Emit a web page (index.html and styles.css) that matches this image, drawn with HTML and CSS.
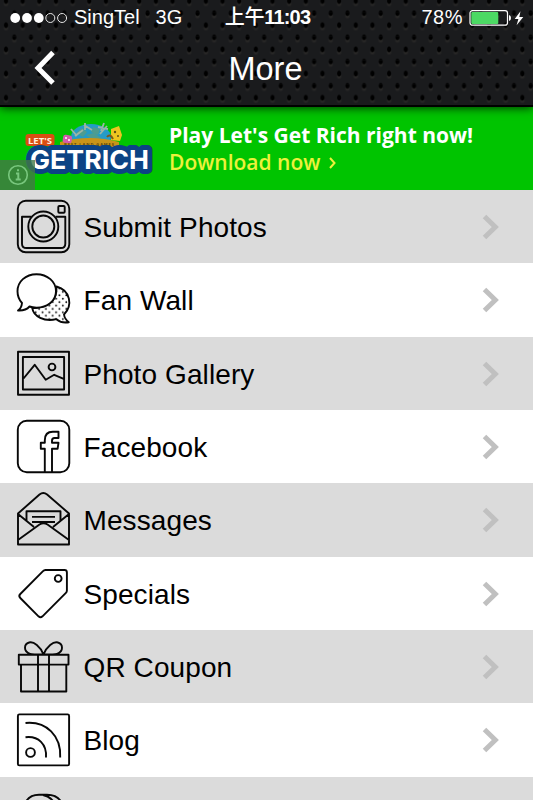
FILE: index.html
```
<!DOCTYPE html>
<html lang="en">
<head>
<meta charset="utf-8">
<title>More</title>
<link rel="stylesheet" href="styles.css">
</head>
<body>
<header class="header">
  <div class="status">
    <div class="status-left">
      <svg class="signal" width="58" height="12" viewBox="0 0 58 12"><g fill="#fff"><circle cx="5.2" cy="6" r="4.9"/><circle cx="17" cy="6" r="4.9"/><circle cx="28.8" cy="6" r="4.9"/></g><g fill="none" stroke="#e8e8e8"><circle cx="40.3" cy="6" r="4.5"/><circle cx="52.1" cy="6" r="4.5"/></g></svg>
      <span class="carrier">SingTel</span><span class="network">3G</span>
    </div>
    <div class="clock">上午<b>11:03</b></div>
    <div class="status-right">
      <span class="percent">78%</span>
      <svg width="56" height="18" viewBox="0 0 56 18"><rect x="1" y="1.6" width="37.5" height="14.6" rx="2.5" fill="none" stroke="#fff" stroke-width="1.2"/><rect x="2.3" y="2.9" width="27" height="12" rx="1" fill="#4cd964"/><path d="M40 6q2 .3 2 3t-2 3z" fill="#fff"/><path d="M51.5 2.2L45.7 10h3.7l-1.8 6.2L54.3 8h-4z" fill="#fff"/></svg>
    </div>
  </div>
  <div class="nav">
    <svg class="back" width="24" height="36" viewBox="0 0 24 36"><path d="M21 2.500L6 18l15 15" fill="none" stroke="#fff" stroke-width="5"/></svg>
    <h1 class="title">More</h1>
  </div>
</header>
<section class="banner">
  <svg class="logo" width="162" height="83" viewBox="0 0 162 83">
    <ellipse cx="91" cy="30" rx="20" ry="13" fill="#259bc6"/>
    <path d="M76 26l6-5 5 4-4 5zM93 20l7 2-2 6-7-3zM86 28l8-2 7 5-7 3z" fill="#4d9c91"/>
    <path d="M71 22l6 7M75 29l8-6M84 18l8 5M104 16l-3 8M107 19l-7 8M85 16v7M98 20l10 2" stroke="#9db5a5" stroke-width="1.800"/>
    <path d="M60 35q30-8 59 0v9H60z" fill="#c99418"/>
    <rect x="63" y="28" width="9" height="8" rx="2.500" fill="#d45bac" transform="rotate(8 67 31)"/><circle cx="66" cy="31" r="1" fill="#fff"/><circle cx="69" cy="33" r="1" fill="#fff"/>
    <path d="M111 22l8-3 3 9-2 6-9-1z" fill="#edc520"/><circle cx="115" cy="25" r="1.200" fill="#5c5015"/><circle cx="118" cy="29" r="1" fill="#5c5015"/><path d="M107 30q3-4 6 2" fill="none" stroke="#7a5b1b" stroke-width="2"/>
    <text x="64" y="38.500" class="ribbon" textLength="50">BEST LAND GAMES</text>
    <rect x="25.500" y="27" width="29" height="12" rx="3" fill="#da4d12"/>
    <text x="28" y="36.500" class="lets" textLength="24" lengthAdjust="spacingAndGlyphs">LET'S</text>
    <text x="30" y="62" class="rich" textLength="119" lengthAdjust="spacingAndGlyphs">GETRICH</text>
  </svg>
  <div class="ad">
    <div class="ad-title">Play Let's Get Rich right now!</div>
    <div class="ad-link">Download now <svg width="9" height="12" viewBox="0 0 9 12"><path d="M2 1l4.5 5L2 11" fill="none" stroke="#edf13c" stroke-width="2"/></svg></div>
  </div>
  <div class="info"><svg width="22" height="22" viewBox="0 0 22 22" fill="none" stroke="#79c77e"><circle cx="11" cy="11" r="9.3" stroke-width="1.6"/><path d="M9 9.5h2.3V15M8.7 15.5h5M11 5.3v2" stroke-width="2"/></svg></div>
</section>
<main class="list">
  <div class="row"><svg class="icon" viewBox="16 0 56 73"><rect x="17.8" y="10.8" width="51.5" height="51.5" rx="8"/><path d="M31.5 26.7H22v27q0 4.3 4.5 4.3h34.3q4.5 0 4.5-4.3v-27h-9.8"/><circle cx="43.3" cy="36.5" r="15"/><circle cx="43.3" cy="36.5" r="11"/><rect x="58.3" y="16" width="6.4" height="6.7" rx="1"/></svg><span>Submit Photos</span><svg class="chevron" viewBox="0 0 18 26"><path d="M2.5 2.5L13.3 13 2.5 23.5"/></svg></div>
  <div class="row"><svg class="icon" viewBox="16 0 56 73"><defs><pattern id="dots" width="6.800" height="6.800" patternUnits="userSpaceOnUse"><circle cx="1.700" cy="1.700" r=".9" fill="#000" stroke="none"/><circle cx="5.100" cy="5.100" r=".9" fill="#000" stroke="none"/></pattern></defs><path d="M56.500 23.500c14 4 16.500 19 7.500 28 .5 4 2.500 6 4.800 7.700-5 1-10-1-12.500-3-12 3-23-3-24-11 15-1 25-7 24.200-21.700z" fill="url(#dots)"/><path d="M36.500 11.200c11 0 19.500 7.500 19.500 17s-8.500 16.500-19.500 16.500q-4 0-7-1.200-4 4.500-11.500 4 3.600-2.500 4-7.500-4.500-5-4.500-11.800c0-9.500 8-17 19-17z" fill="#fff"/></svg><span>Fan Wall</span><svg class="chevron" viewBox="0 0 18 26"><path d="M2.5 2.5L13.3 13 2.5 23.5"/></svg></div>
  <div class="row"><svg class="icon" viewBox="16 0 56 73"><rect x="18" y="14.7" width="51" height="43"/><path d="M22.900 20h41.200v32.500H22.900zM23.500 41.500l11.200-13.700 11 15 8.500-5 9.500 4"/><circle cx="52" cy="30" r="3.400"/></svg><span>Photo Gallery</span><svg class="chevron" viewBox="0 0 18 26"><path d="M2.5 2.5L13.3 13 2.500 23.500"/></svg></div>
  <div class="row"><svg class="icon" viewBox="16 0 56 73"><rect x="17.800" y="10.800" width="51.500" height="51.500" rx="9"/><path d="M44.800 62V38.800h-4v-6h4v-2.500q0-8.500 8-8.500h5.700v6.200h-4q-2.500 0-2.500 2.800v2h6.500l-.9 6H52V62"/></svg><span>Facebook</span><svg class="chevron" viewBox="0 0 18 26"><path d="M2.5 2.5L13.3 13 2.5 23.5"/></svg></div>
  <div class="row"><svg class="icon" viewBox="16 0 56 73"><path d="M18 30.500L39.500 11.500q3.800-3 7.600 0L69 30.500v31H18zM18 31l16 13M69 31L53 44M18 57l21.500-15.500q4-2.500 8 0L69 57M26.500 37.500v-9.300h34v9.300M32 33.900h23M32 39h23"/></svg><span>Messages</span><svg class="chevron" viewBox="0 0 18 26"><path d="M2.5 2.5L13.3 13 2.500 23.500"/></svg></div>
  <div class="row"><svg class="icon" viewBox="16 0 56 73"><path d="M45.500 13h19q2.400 0 2.400 2.400v18q0 1.500-1 2.500L42.500 59.300q-2 1.800-4 0L20.300 41q-2-2 0-4L43 14.200q1-1.200 2.500-1.200z"/><circle cx="58.200" cy="21.500" r="3.400"/></svg><span>Specials</span><svg class="chevron" viewBox="0 0 18 26"><path d="M2.5 2.5L13.3 13 2.5 23.500"/></svg></div>
  <div class="row"><svg class="icon" viewBox="16 0 56 73"><path d="M18.800 24.800h49.700v9.800H18.800zM21 35v26.500h45.300V35M38 25v36.500M49 25v36.500M43.500 24.500c-3-8-10-13.500-14.500-12-5 1.500-6 9 1 11.300 2 .7 5 .7 13.500.700M43.500 24.500c3-8 10-13.500 14.500-12 5 1.500 6 9-1 11.300-2 .7-5 .7-13.500.7"/></svg><span>QR Coupon</span><svg class="chevron" viewBox="0 0 18 26"><path d="M2.5 2.5L13.3 13 2.5 23.5"/></svg></div>
  <div class="row"><svg class="icon" viewBox="16 0 56 73"><rect x="17.900" y="11.400" width="51.200" height="51" rx="1.500"/><circle cx="30.500" cy="49.500" r="4.400"/><path d="M25.500 20c21-2 35.800 13 34.700 34.500M25.500 34.200c13-1.500 21.500 7 20.500 20.300"/></svg><span>Blog</span><svg class="chevron" viewBox="0 0 18 26"><path d="M2.5 2.5L13.3 13 2.5 23.5"/></svg></div>
  <div class="row row-cut"><svg class="icon" viewBox="16 0 56 23"><path d="M26 24.500c3-5 8-6.700 13-6.700h8c6 0 11 2 14 6.700M43 18q6 1 10 6"/></svg></div>
</main>
</body>
</html>
```
FILE: styles.css
```
* { box-sizing: border-box; }
body {
  margin: 0;
  width: 533px;
  height: 800px;
  overflow: hidden;
  background: #fff;
  color: #000;
  font-family: "Liberation Sans", "Noto Sans CJK SC", sans-serif;
}
svg { display: block; flex: none; }
.header {
  position: relative;
  height: 107px;
  color: #fff;
  background-color: #1a1b1d;
  background-image:
    radial-gradient(ellipse 2.5px 3.5px at 6px 13px, #000 60%, transparent 100%),
    radial-gradient(ellipse 2.5px 3.5px at 14.330px 1px, #000 60%, transparent 100%),
    radial-gradient(ellipse 2.5px 3.5px at 14.330px 25.200px, #000 60%, transparent 100%),
    radial-gradient(ellipse 3px 3px at 6px 16px, #2a2928 30%, transparent 100%),
    radial-gradient(ellipse 3px 3px at 14.330px 4px, #2a2928 30%, transparent 100%);
  background-size: 16.667px 24.200px;
  background-position: 0 12.200px;
  border-bottom: 2px solid #000;
  box-shadow: 0 1px 9px rgba(0, 0, 0, .75);
  z-index: 1;
}
.status {
  display: grid;
  grid-template-columns: 1fr auto 1fr;
  align-items: center;
  height: 35px;
  padding: 0 8px 0 10px;
  font-size: 20px;
  line-height: 35px;
}
.status-left, .status-right { display: flex; align-items: center; }
.status-right { justify-content: flex-end; }
.carrier { margin-left: 6px; font-size: 20px; }
.network { margin-left: 16px; font-size: 20px; }
.clock { font-size: 20px; font-weight: 500; letter-spacing: -.3px; }
.clock b { letter-spacing: -.8px; }
.percent { margin-right: 6px; font-size: 20px; letter-spacing: .5px; }
.nav {
  display: grid;
  grid-template-columns: 1fr auto 1fr;
  align-items: center;
  height: 66px;
  padding-top: 2px;
}
.back { margin: -2px 0 0 32px; }
.title { margin: 0 2px 0 0; font-size: 32.500px; font-weight: 400; line-height: 64px; }
.banner {
  position: relative;
  display: flex;
  height: 83px;
  background: #00c400;
}
.ad {
  margin-left: 7px;
  padding-top: 15px;
  font-family: "Open Sans", sans-serif;
  font-weight: 700;
  line-height: 27px;
  white-space: nowrap;
}
.ad-title { color: #fff; font-size: 21px; }
.ad-link { display: flex; align-items: center; gap: 8px; color: #edf13c; font-size: 21px; font-weight: 600; }
.lets { font: 700 9px "Open Sans", sans-serif; fill: #fff0e0; }
.ribbon { font: 700 4px "Open Sans", sans-serif; fill: #58430c; }
.rich { font: 700 26px Inter, sans-serif; fill: #fff; stroke: #0c4384; stroke-width: 10px; stroke-linejoin: round; paint-order: stroke; }
.info {
  position: absolute;
  left: 0;
  bottom: 0;
  display: flex;
  width: 35px;
  height: 30px;
  padding: 4px 7px;
  background: rgba(68, 120, 70, .8);
}
.row {
  display: flex;
  align-items: center;
  height: 73.330px;
  padding: 0 33px 0 16px;
  font-size: 28px;
}
.row:nth-child(odd) { background: #dbdbdb; }
.row span { flex: 1; margin: 3px 0 0 11.500px; letter-spacing: .1px; }
.icon { width: 56px; height: 73px; fill: none; stroke: #080808; stroke-width: 1.900; stroke-linejoin: round; }
.row-cut { height: 23px; overflow: hidden; }
.row-cut .icon { height: 23px; }
.chevron { width: 18px; height: 26px; margin-top: 1px; fill: none; stroke: #c0c0c0; stroke-width: 5; }
```
